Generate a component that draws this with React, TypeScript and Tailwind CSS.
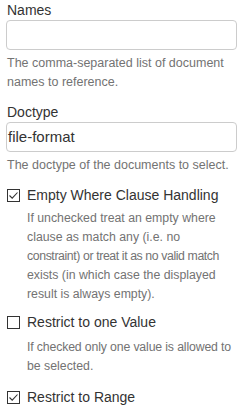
import React from "react";

function Check({ checked }: { checked: boolean }) {
  return (
    <svg width="13" height="13" viewBox="0 0 13 13" className="shrink-0">
      <rect x="0.5" y="0.5" width="12" height="12" fill="#fff" stroke="#333" strokeWidth="1" />
      {checked && (
        <path d="M2.5 6.5 L5.2 9.2 L10.5 3.5" fill="none" stroke="#333" strokeWidth="1.1" />
      )}
    </svg>
  );
}

export default function App() {
  return (
    <div className="w-[249px] h-[413px] bg-white overflow-hidden text-[#333] font-['Liberation_Sans',Arial,sans-serif]">
      <div className="ml-[6px] w-[231px]">
        <div className="text-[14px] leading-[20px] pl-[1px]">Names</div>
        <div className="h-[30px] border border-[#ccc] rounded-[4px] bg-white"></div>
        <div className="mt-[4px] text-[12.5px] leading-[19px] text-[#737373] pl-[1px]">
          The comma-separated list of document names to reference.
        </div>

        <div className="mt-[10px] text-[14px] leading-[20px] pl-[1px]">Doctype</div>
        <div className="h-[30px] border border-[#ccc] rounded-[4px] bg-white flex items-center px-[1px] text-[15px]">
          file-format
        </div>
        <div className="mt-[4px] text-[12.5px] leading-[19px] text-[#737373] pl-[1px]">
          The doctype of the documents to select.
        </div>

        <div className="mt-[10px] flex items-center gap-[7px] pl-[1px] text-[14px] leading-[20px]">
          <Check checked />
          <span>Empty Where Clause Handling</span>
        </div>
        <div className="mt-[4px] pl-[21px] text-[12.3px] leading-[19px] text-[#737373] whitespace-nowrap">
          <div>If unchecked treat an empty where</div>
          <div>clause as match any (i.e. no</div>
          <div className="tracking-[-0.4px]">constraint) or treat it as no valid match</div>
          <div>exists (in which case the displayed</div>
          <div>result is always empty).</div>
        </div>

        <div className="mt-[8px] flex items-center gap-[7px] pl-[1px] text-[14px] leading-[20px]">
          <Check checked={false} />
          <span>Restrict to one Value</span>
        </div>
        <div className="mt-[6px] pl-[21px] text-[12.3px] leading-[19px] text-[#737373] whitespace-nowrap">
          <div className="tracking-[-0.15px]">If checked only one value is allowed to</div>
          <div>be selected.</div>
        </div>

        <div className="mt-[11px] flex items-center gap-[7px] pl-[1px] text-[14px] leading-[20px]">
          <Check checked />
          <span>Restrict to Range</span>
        </div>
      </div>
    </div>
  );
}
